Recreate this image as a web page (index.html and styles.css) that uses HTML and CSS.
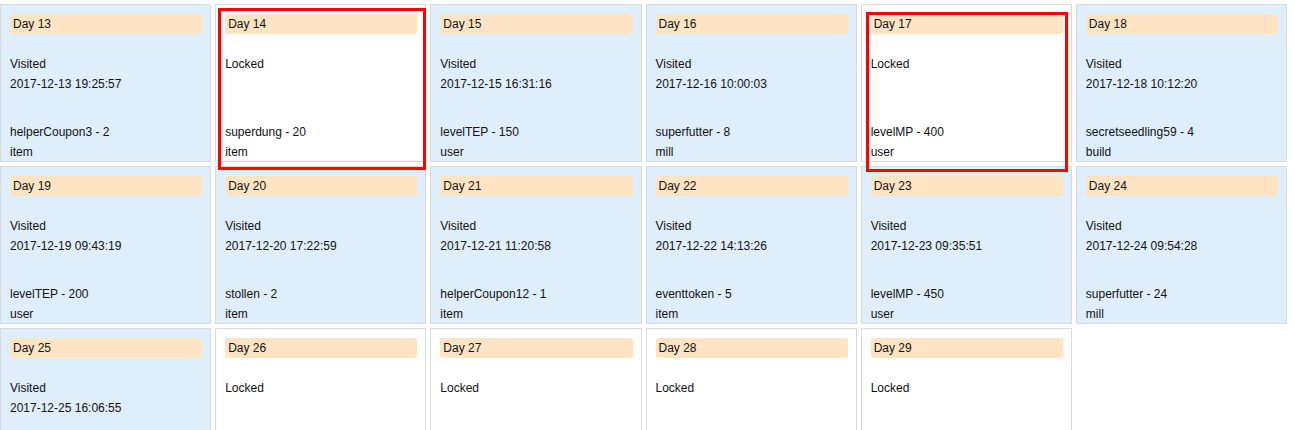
FILE: index.html
```html
<!DOCTYPE html>
<html lang="en">
<head>
    <meta charset="UTF-8">
    <title>Advent Calendar</title>
    <link rel="stylesheet" href="styles.css">
</head>
<body>
    <div class="board">
        <div class="day visited">
            <div class="day-title">Day 13</div>
            <div class="status">Visited<br>2017-12-13 19:25:57</div>
            <div class="reward">helperCoupon3 - 2<br>item</div>
        </div>
        <div class="day">
            <div class="day-title">Day 14</div>
            <div class="status">Locked</div>
            <div class="reward">superdung - 20<br>item</div>
        </div>
        <div class="day visited">
            <div class="day-title">Day 15</div>
            <div class="status">Visited<br>2017-12-15 16:31:16</div>
            <div class="reward">levelTEP - 150<br>user</div>
        </div>
        <div class="day visited">
            <div class="day-title">Day 16</div>
            <div class="status">Visited<br>2017-12-16 10:00:03</div>
            <div class="reward">superfutter - 8<br>mill</div>
        </div>
        <div class="day">
            <div class="day-title">Day 17</div>
            <div class="status">Locked</div>
            <div class="reward">levelMP - 400<br>user</div>
        </div>
        <div class="day visited">
            <div class="day-title">Day 18</div>
            <div class="status">Visited<br>2017-12-18 10:12:20</div>
            <div class="reward">secretseedling59 - 4<br>build</div>
        </div>

        <div class="day visited">
            <div class="day-title">Day 19</div>
            <div class="status">Visited<br>2017-12-19 09:43:19</div>
            <div class="reward">levelTEP - 200<br>user</div>
        </div>
        <div class="day visited">
            <div class="day-title">Day 20</div>
            <div class="status">Visited<br>2017-12-20 17:22:59</div>
            <div class="reward">stollen - 2<br>item</div>
        </div>
        <div class="day visited">
            <div class="day-title">Day 21</div>
            <div class="status">Visited<br>2017-12-21 11:20:58</div>
            <div class="reward">helperCoupon12 - 1<br>item</div>
        </div>
        <div class="day visited">
            <div class="day-title">Day 22</div>
            <div class="status">Visited<br>2017-12-22 14:13:26</div>
            <div class="reward">eventtoken - 5<br>item</div>
        </div>
        <div class="day visited">
            <div class="day-title">Day 23</div>
            <div class="status">Visited<br>2017-12-23 09:35:51</div>
            <div class="reward">levelMP - 450<br>user</div>
        </div>
        <div class="day visited">
            <div class="day-title">Day 24</div>
            <div class="status">Visited<br>2017-12-24 09:54:28</div>
            <div class="reward">superfutter - 24<br>mill</div>
        </div>

        <div class="day visited">
            <div class="day-title">Day 25</div>
            <div class="status">Visited<br>2017-12-25 16:06:55</div>
        </div>
        <div class="day">
            <div class="day-title">Day 26</div>
            <div class="status">Locked</div>
        </div>
        <div class="day">
            <div class="day-title">Day 27</div>
            <div class="status">Locked</div>
        </div>
        <div class="day">
            <div class="day-title">Day 28</div>
            <div class="status">Locked</div>
        </div>
        <div class="day">
            <div class="day-title">Day 29</div>
            <div class="status">Locked</div>
        </div>

        <!-- highlight boxes -->
        <div class="mark mark-14"></div>
        <div class="mark mark-17"></div>
    </div>
</body>
</html>
```

FILE: styles.css
```css
body {
    margin: 0;
    padding: 0;
    font-family: "Liberation Sans", Arial, sans-serif;
    font-size: 12px;
    color: #111;
    background-color: #fff;
}
.board {
    position: relative;
    width: 1287px;
    padding-top: 4px;
    display: grid;
    grid-template-columns: repeat(6, 1fr);
    gap: 4px;
}
.day {
    box-sizing: border-box;
    height: 158px;
    border: 1px solid #dadada;
    padding: 9px 8px 0 9px;
    background-color: #fff;
    display: flex;
    flex-direction: column;
    line-height: 20px;
}
.day.visited {
    background-color: #deeefd;
}
.day-title {
    height: 20px;
    padding-left: 3px;
    background-color: #ffe4c4;
    border-radius: 2px;
    margin-bottom: 20px;
}
.reward {
    margin-top: auto;
    margin-bottom: -1px;
}
.mark {
    position: absolute;
    box-sizing: border-box;
    border: 3px solid #ff0000;
}
.mark-14 {
    left: 218px;
    top: 8px;
    width: 208px;
    height: 162px;
}
.mark-17 {
    left: 866px;
    top: 12px;
    width: 202px;
    height: 160px;
}
```
